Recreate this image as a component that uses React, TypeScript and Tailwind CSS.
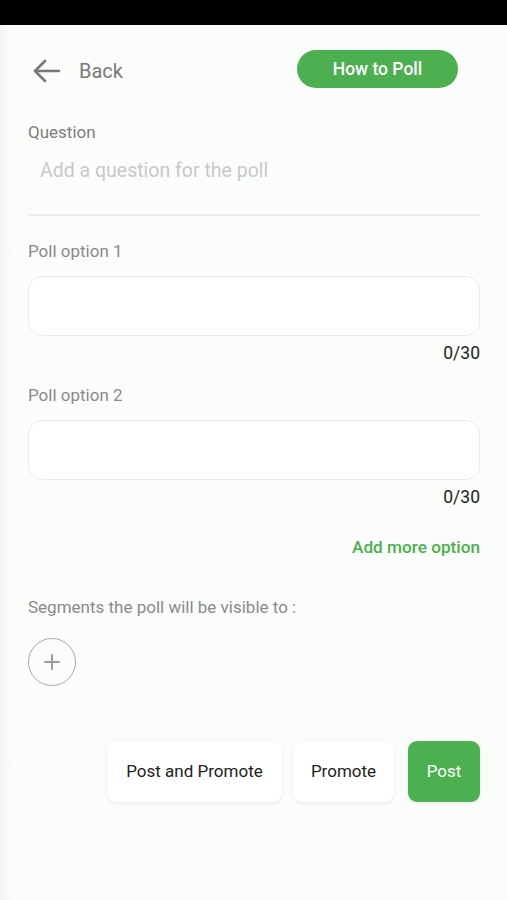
import React, { useState } from 'react';

const PollOption = ({ label }: { label: string }) => {
  const [value, setValue] = useState('');
  return (
    <div className="flex flex-col">
      <span className="text-[17px] leading-[20px] text-[#8a8a8a]">{label}</span>
      <input
        value={value}
        maxLength={30}
        onChange={(e) => setValue(e.target.value)}
        className="mt-[15px] h-[60px] w-full rounded-[14px] border border-[#ebebeb] bg-white px-4 outline-none"
      />
      <span className="mt-[7px] self-end text-[17.5px] leading-[20px] text-[#222]">{value.length}/30</span>
    </div>
  );
};

const App: React.FC = () => {
  return (
    <div
      className="flex min-h-[900px] w-[507px] flex-col bg-[linear-gradient(to_right,#f3f4f2_0px,#fbfdfa_12px,#fbfdfa_100%)] text-[#222]"
      style={{ fontFamily: 'Roboto, "Liberation Sans", sans-serif' }}
    >
      <div className="h-[25px] bg-black" />

      {/* header */}
      <div className="mt-[26px] flex h-[38px] items-center pl-[33px] pr-[49px]">
        <button className="mt-[2px] flex items-center gap-[18px] text-[#7a7a7a]">
          <svg width="28" height="24" viewBox="0 0 28 24" fill="none" stroke="#777" strokeWidth="2.6" strokeLinecap="round" strokeLinejoin="round">
            <path d="M26 12H3" />
            <path d="M12 2L2 12l10 10" />
          </svg>
          <span className="text-[20px] leading-none">Back</span>
        </button>
        <button className="ml-auto -mt-[2px] h-[38px] w-[161px] rounded-full bg-[#4caf50] text-[17.5px] font-medium text-white">
          How to Poll
        </button>
      </div>

      <div className="flex flex-col pl-[28px] pr-[27px]">
        {/* question */}
        <span className="mt-[33px] text-[17px] leading-[20px] text-[#7d7d7d]">Question</span>
        <input
          placeholder="Add a question for the poll"
          className="mt-[16px] bg-transparent px-[12px] text-[19.5px] leading-[26px] outline-none placeholder:text-[#c9c9c9]"
        />
        <div className="mt-[30px] h-[2px] bg-[#ececec]" />

        <div className="mt-[25px] flex flex-col gap-[22px]">
          <PollOption label="Poll option 1" />
          <PollOption label="Poll option 2" />
        </div>

        <button className="mt-[30px] self-end text-[17.2px] font-medium leading-[20px] text-[#4caf50]">
          Add more option
        </button>

        <span className="mt-[40px] text-[17px] leading-[20px] text-[#8a8a8a]">
          Segments the poll will be visible to :
        </span>

        <button className="mt-[21px] flex h-[48px] w-[48px] items-center justify-center rounded-full border-[1.5px] border-[#a9a9a9]">
          <svg width="18" height="18" viewBox="0 0 18 18" stroke="#9a9a9a" strokeWidth="2" strokeLinecap="round">
            <path d="M9 2v14M2 9h14" />
          </svg>
        </button>

        {/* actions */}
        <div className="mt-[55px] flex justify-end gap-[11px]">
          <button className="h-[61px] w-[175px] rounded-[9px] bg-white text-[17px] text-[#222] shadow-[0_1px_4px_rgba(0,0,0,0.08)]">
            Post and Promote
          </button>
          <button className="h-[61px] w-[101px] rounded-[9px] bg-white text-[17px] text-[#222] shadow-[0_1px_4px_rgba(0,0,0,0.08)]">
            Promote
          </button>
          <button className="ml-[3px] h-[61px] w-[72px] rounded-[9px] bg-[#4caf50] text-[17px] text-white shadow-[0_1px_4px_rgba(0,0,0,0.08)]">
            Post
          </button>
        </div>
      </div>
    </div>
  );
};

export default App;
